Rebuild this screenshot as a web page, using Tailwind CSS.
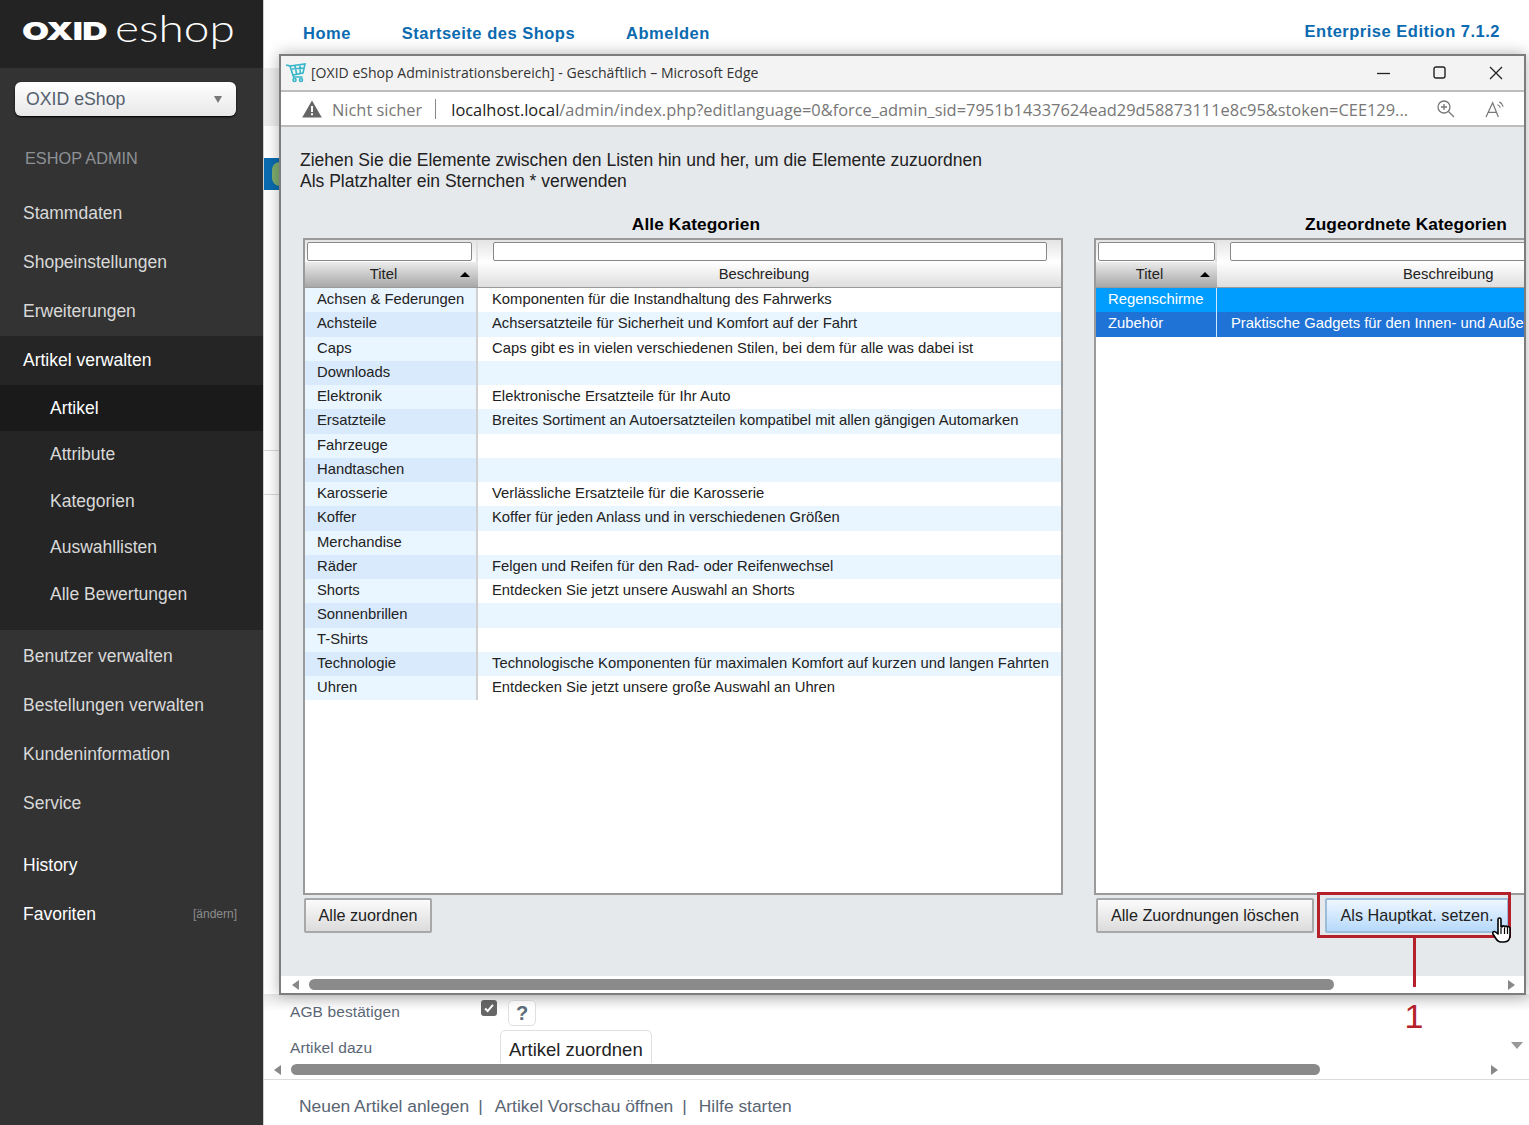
<!DOCTYPE html>
<html lang="de">
<head>
<meta charset="utf-8">
<title>OXID eShop</title>
<script src="https://cdn.jsdelivr.net/npm/@tailwindcss/browser@4"></script>
</head>
<body class="m-0 bg-white">
<div class="relative flex w-[1529px] h-[1125px] overflow-hidden bg-white font-['Liberation_Sans',Arial,sans-serif]">

  <!-- Sidebar -->
  <aside class="w-[263px] h-full shrink-0 bg-[#333333] text-[#d9d9d9] text-[17.5px] flex flex-col">
    <div class="h-[68px] bg-[#232323] flex items-center pl-[22px] text-white whitespace-nowrap">
      <span class="inline-block origin-left font-['Inter',sans-serif] font-black text-[25px] leading-none scale-x-[1.4] w-[84px] tracking-[-0.5px] -mt-[6px]">OXID</span>
      <span class="inline-block origin-left font-['Lato',sans-serif] font-light text-[38px] leading-none ml-[9px] -mt-[14px] scale-x-[1.21]">eshop</span>
    </div>
    <div class="pt-[14px] pl-[15px]">
      <div class="w-[221px] h-[34px] rounded-[6px] bg-linear-to-b from-white to-[#e8e8e8] shadow-[0_1px_2px_#000] flex items-center justify-between pl-[11px] pr-[14px] text-[#55606e] text-[17.7px]">
        <span>OXID eShop</span>
        <span class="w-0 h-0 border-x-[4.5px] border-x-transparent border-t-[7px] border-t-[#777]"></span>
      </div>
    </div>
    <div class="pl-[25px] pt-[32px] h-[73px] text-[#8d9195] text-[16.3px] leading-[20px]">ESHOP ADMIN</div>
    <div class="h-[49px] pl-[23px] flex items-center">Stammdaten</div>
    <div class="h-[49px] pl-[23px] flex items-center">Shopeinstellungen</div>
    <div class="h-[49px] pl-[23px] flex items-center">Erweiterungen</div>
    <div class="h-[294px] bg-[#252525] flex flex-col">
      <div class="h-[49px] pl-[23px] flex items-center text-white">Artikel verwalten</div>
      <div class="h-[46px] pl-[50px] flex items-center bg-[#1a1a1a] text-white">Artikel</div>
      <div class="h-[46.5px] pl-[50px] flex items-center">Attribute</div>
      <div class="h-[46.5px] pl-[50px] flex items-center">Kategorien</div>
      <div class="h-[46.5px] pl-[50px] flex items-center">Auswahllisten</div>
      <div class="h-[46.5px] pl-[50px] flex items-center">Alle Bewertungen</div>
    </div>
    <div class="h-[2px]"></div>
    <div class="h-[49px] pl-[23px] flex items-center">Benutzer verwalten</div>
    <div class="h-[49px] pl-[23px] flex items-center">Bestellungen verwalten</div>
    <div class="h-[49px] pl-[23px] flex items-center">Kundeninformation</div>
    <div class="h-[49px] pl-[23px] flex items-center">Service</div>
    <div class="h-[13px]"></div>
    <div class="h-[49px] pl-[23px] flex items-center text-white">History</div>
    <div class="h-[49px] pl-[23px] pr-[26px] flex items-center justify-between text-white">
      <span>Favoriten</span><span class="text-[12px] text-[#8d8d8d] -mt-[1px]">[ändern]</span>
    </div>
  </aside>

  <!-- Main page behind the popup -->
  <main class="relative flex-1 flex flex-col border-l border-[#cfcfcf]">
    <header class="h-[68px] flex items-start justify-between pt-[22px] pl-[39px] pr-[29px] font-bold text-[#0b6ab0] text-[16.5px] tracking-[0.5px] leading-[22px]">
      <nav class="flex gap-[51px]"><span>Home</span><span>Startseite des Shops</span><span>Abmelden</span></nav>
      <span class="-mt-[2px]">Enterprise Edition 7.1.2</span>
    </header>
    <div class="h-[58px] bg-[#eeeeee] w-[17px]"></div>
    <div class="h-[32px]"></div>
    <div class="h-[32px] w-[17px] bg-[#0a6cb0] flex items-center overflow-hidden"><span class="w-[16px] h-[24px] rounded-full bg-[#7fae70] ml-[8px] shrink-0"></span></div>
    <div class="h-[260px]"></div>
    <div class="h-[44px] w-[17px] border-t border-[#d8d8d8]"></div>
    <div class="flex-1 w-[17px] border-t border-[#d8d8d8]"></div>
    <div class="h-[46px] flex items-center pl-[35px] pt-[7px] text-[#596573] text-[17.4px] gap-[9px] border-t border-[#dcdcdc]">
      <span>Neuen Artikel anlegen</span><span>|</span><span class="ml-[3px]">Artikel Vorschau öffnen</span><span>|</span><span class="ml-[3px]">Hilfe starten</span>
    </div>
  </main>

  <!-- Page content showing beneath the popup -->
  <div class="absolute left-[264px] top-[994px] w-[1265px] h-[85px] bg-linear-to-b from-[#e6e6e6] to-white to-[20%] text-[#5b6675]">
    <div class="flex items-start h-[69px] pl-[26px] pt-[6px]">
      <div class="w-[191px] text-[15.5px] tracking-[0.1px]">
        <div class="leading-[24px]">AGB bestätigen</div>
        <div class="leading-[24px] mt-[12px]">Artikel dazu</div>
      </div>
      <div class="w-[27px] h-full relative">
        <span class="absolute left-0 top-0 w-[16px] h-[16px] rounded-[3px] bg-[#666] flex items-center justify-center">
          <svg viewBox="0 0 16 16" class="w-[14px] h-[14px]"><path d="M3.5 8.5l3 3 6-7" fill="none" stroke="#fff" stroke-width="2.4"/></svg>
        </span>
      </div>
      <div class="relative h-full">
        <span class="absolute left-0 top-0 w-[28px] h-[26px] rounded-[5px] border border-[#dfdfdf] bg-white flex items-center justify-center font-bold text-[#5f6d7a] text-[20px]">?</span>
        <span class="absolute -left-[8px] top-[30px] w-[152px] h-[40px] rounded-t-[5px] border border-[#dfdfdf] bg-white pl-[8px] pt-[7px] text-[#222] text-[18.5px] leading-[24px] whitespace-nowrap">Artikel zuordnen</span>
      </div>
    </div>
    <div class="relative h-[16px] bg-white">
      <span class="absolute left-[10px] top-[2px] w-0 h-0 border-y-[5px] border-y-transparent border-r-[7px] border-r-[#888]"></span>
      <span class="absolute left-[27px] top-[1px] w-[1029px] h-[11px] rounded-full bg-[#8a8a8a]"></span>
      <span class="absolute left-[1227px] top-[2px] w-0 h-0 border-y-[5px] border-y-transparent border-l-[7px] border-l-[#888]"></span>
    </div>
  </div>
  <span class="absolute left-[1511px] top-[1042px] w-0 h-0 border-x-[6px] border-x-transparent border-t-[7px] border-t-[#999]"></span>

  <!-- Popup window -->
  <section class="absolute left-[279px] top-[54px] w-[1247px] h-[941px] flex flex-col border-2 border-[#7d7d7d] bg-[#e6e9ec] shadow-[0_0_14px_rgba(0,0,0,0.3)] overflow-hidden">
    <div class="h-[36px] shrink-0 bg-[#f3f3f3] border-b-2 border-[#bdbdbd] flex items-center text-[#333] text-[14.05px] font-['Open_Sans',sans-serif] pl-[4px]">
      <svg viewBox="0 0 22 22" class="w-[22px] h-[22px] shrink-0" fill="none" stroke="#36b6c8" stroke-width="1.6"><path d="M1 3l4 1 3.5 11h9"/><path d="M5 4l15-2-2 9-10 2M7 7l12-1M10 3.5l1.500 8M15 3l.3 8"/><circle cx="9.500" cy="18" r="1.500"/><circle cx="16" cy="18" r="1.500"/></svg>
      <span class="ml-[4px] whitespace-nowrap">[OXID eShop Administrationsbereich] - Geschäftlich – Microsoft Edge</span>
      <div class="ml-auto flex items-center">
        <svg viewBox="0 0 14 14" class="w-[14px] h-[14px] mr-[42px]"><path d="M0 7.500h13" stroke="#222" stroke-width="1.300"/></svg>
        <svg viewBox="0 0 14 14" class="w-[14px] h-[14px] mr-[42px]"><rect x="1" y="1" width="11" height="11" rx="2" fill="none" stroke="#222" stroke-width="1.400"/></svg>
        <svg viewBox="0 0 14 14" class="w-[14px] h-[14px] mr-[21px]"><path d="M1 1l12 12M13 1L1 13" stroke="#222" stroke-width="1.300"/></svg>
      </div>
    </div>
    <div class="h-[35px] shrink-0 bg-white border-b-2 border-[#bdbdbd] flex items-center pl-[21px] pt-[3px] text-[16.4px] font-['Open_Sans',sans-serif] text-[#777] whitespace-nowrap">
      <svg viewBox="0 0 20 18" class="w-[20px] h-[18px] shrink-0 -mt-[2px]"><path d="M10 0.500L19.800 17.500H0.200Z" fill="#666"/><path d="M9 6h2v6H9zM9 13.300h2v2H9z" fill="#fff"/></svg>
      <span class="ml-[10px]">Nicht sicher</span>
      <span class="ml-[13px] w-px h-[20px] bg-[#888] -mt-[2px]"></span>
      <span class="ml-[15px]"><span class="text-[#222]">localhost.local</span>/admin/index.php?editlanguage=0&amp;force_admin_sid=7951b14337624ead29d58873111e8c95&amp;stoken=CEE129...</span>
      <div class="ml-auto flex items-center pr-[18px] -mt-[2px]">
        <svg viewBox="0 0 20 20" class="w-[20px] h-[20px] mr-[29px]" fill="none" stroke="#777" stroke-width="1.300"><circle cx="8" cy="8" r="6"/><path d="M12.500 12.500l5.500 5.500M5 8h6M8 5v6"/></svg>
        <svg viewBox="0 0 22 20" class="w-[21px] h-[19px]" fill="none" stroke="#777" stroke-width="1.300"><path d="M1 18L8 3l6 15M3.500 13h8"/><path d="M13 5a4 4 0 0 1 3 3M15 2a7 7 0 0 1 4 5"/></svg>
      </div>
    </div>

    <div class="flex-1 min-h-0 pt-[23px] pl-[19px] flex flex-col text-black">
      <p class="m-0 text-[17.5px] leading-[21px] text-[#222]">Ziehen Sie die Elemente zwischen den Listen hin und her, um die Elemente zuzuordnen<br>Als Platzhalter ein Sternchen * verwenden</p>

      <div class="flex mt-[19px] pl-[3px] gap-[31px]">
        <!-- Left list -->
        <div class="w-[760px] shrink-0">
          <h2 class="m-0 h-[27px] pl-[26px] text-center text-[17.3px] font-bold leading-[26px] tracking-[0.1px]">Alle Kategorien</h2>
          <div class="h-[657px] border-2 border-[#9a9a9a] bg-white text-[14.8px] text-[#222] overflow-hidden">
            <div class="grid grid-cols-[173px_1fr] h-[22px] bg-linear-to-b from-[#e4e4e4] to-white">
              <div class="pl-[2px] pt-[2px] border-r-2 border-[#e0e0e0]"><div class="w-[165px] h-[19px] rounded-[2px] border border-[#888] bg-white"></div></div>
              <div class="pl-[15px] pt-[2px]"><div class="w-[554px] h-[19px] rounded-[2px] border border-[#888] bg-white"></div></div>
            </div>
            <div class="grid grid-cols-[173px_1fr] h-[25px] leading-[25px] border-b-2 border-[#9a9a9a] box-content -mb-[1px]">
              <div class="relative text-center pr-[16px] bg-linear-to-b from-[#ececec] to-[#a8a8a8]">Titel<span class="absolute right-[8px] top-[10px] w-0 h-0 border-x-[5px] border-x-transparent border-b-[5px] border-b-black"></span></div>
              <div class="text-center pr-[11px] bg-linear-to-b from-white to-[#dedede]">Beschreibung</div>
            </div>
            <div class="grid grid-cols-[173px_1fr] auto-rows-[24.25px] leading-[23.5px] whitespace-nowrap">
              <div class="pl-[12px] bg-[#e9f5ff] border-r-2 border-[#d0d0d0]">Achsen &amp; Federungen</div><div class="pl-[14px] bg-white">Komponenten für die Instandhaltung des Fahrwerks</div>
              <div class="pl-[12px] bg-[#d9eafc] border-r-2 border-[#d0d0d0]">Achsteile</div><div class="pl-[14px] bg-[#e9f5ff]">Achsersatzteile für Sicherheit und Komfort auf der Fahrt</div>
              <div class="pl-[12px] bg-[#e9f5ff] border-r-2 border-[#d0d0d0]">Caps</div><div class="pl-[14px] bg-white">Caps gibt es in vielen verschiedenen Stilen, bei dem für alle was dabei ist</div>
              <div class="pl-[12px] bg-[#d9eafc] border-r-2 border-[#d0d0d0]">Downloads</div><div class="pl-[14px] bg-[#e9f5ff]"></div>
              <div class="pl-[12px] bg-[#e9f5ff] border-r-2 border-[#d0d0d0]">Elektronik</div><div class="pl-[14px] bg-white">Elektronische Ersatzteile für Ihr Auto</div>
              <div class="pl-[12px] bg-[#d9eafc] border-r-2 border-[#d0d0d0]">Ersatzteile</div><div class="pl-[14px] bg-[#e9f5ff]">Breites Sortiment an Autoersatzteilen kompatibel mit allen gängigen Automarken</div>
              <div class="pl-[12px] bg-[#e9f5ff] border-r-2 border-[#d0d0d0]">Fahrzeuge</div><div class="pl-[14px] bg-white"></div>
              <div class="pl-[12px] bg-[#d9eafc] border-r-2 border-[#d0d0d0]">Handtaschen</div><div class="pl-[14px] bg-[#e9f5ff]"></div>
              <div class="pl-[12px] bg-[#e9f5ff] border-r-2 border-[#d0d0d0]">Karosserie</div><div class="pl-[14px] bg-white">Verlässliche Ersatzteile für die Karosserie</div>
              <div class="pl-[12px] bg-[#d9eafc] border-r-2 border-[#d0d0d0]">Koffer</div><div class="pl-[14px] bg-[#e9f5ff]">Koffer für jeden Anlass und in verschiedenen Größen</div>
              <div class="pl-[12px] bg-[#e9f5ff] border-r-2 border-[#d0d0d0]">Merchandise</div><div class="pl-[14px] bg-white"></div>
              <div class="pl-[12px] bg-[#d9eafc] border-r-2 border-[#d0d0d0]">Räder</div><div class="pl-[14px] bg-[#e9f5ff]">Felgen und Reifen für den Rad- oder Reifenwechsel</div>
              <div class="pl-[12px] bg-[#e9f5ff] border-r-2 border-[#d0d0d0]">Shorts</div><div class="pl-[14px] bg-white">Entdecken Sie jetzt unsere Auswahl an Shorts</div>
              <div class="pl-[12px] bg-[#d9eafc] border-r-2 border-[#d0d0d0]">Sonnenbrillen</div><div class="pl-[14px] bg-[#e9f5ff]"></div>
              <div class="pl-[12px] bg-[#e9f5ff] border-r-2 border-[#d0d0d0]">T-Shirts</div><div class="pl-[14px] bg-white"></div>
              <div class="pl-[12px] bg-[#d9eafc] border-r-2 border-[#d0d0d0]">Technologie</div><div class="pl-[14px] bg-[#e9f5ff]">Technologische Komponenten für maximalen Komfort auf kurzen und langen Fahrten</div>
              <div class="pl-[12px] bg-[#e9f5ff] border-r-2 border-[#d0d0d0]">Uhren</div><div class="pl-[14px] bg-white">Entdecken Sie jetzt unsere große Auswahl an Uhren</div>
            </div>
          </div>
          <div class="pt-[3px] pl-[1px]">
            <button class="w-[128px] h-[35px] rounded-[2px] border-2 border-[#a8a8a8] bg-linear-to-b from-[#fbfbfb] to-[#dcdcdc] text-[16.2px] text-[#222]">Alle zuordnen</button>
          </div>
        </div>

        <!-- Right list -->
        <div class="flex-1 min-w-0">
          <h2 class="m-0 h-[27px] pl-[211px] text-[17.3px] font-bold leading-[26px] tracking-[0.1px] whitespace-nowrap">Zugeordnete Kategorien</h2>
          <div class="h-[657px] border-y-2 border-l-2 border-[#9a9a9a] bg-white text-[14.8px] text-[#222] overflow-hidden">
            <div class="grid grid-cols-[121px_1fr] h-[22px] bg-linear-to-b from-[#e4e4e4] to-white">
              <div class="pl-[2px] pt-[2px] border-r-2 border-[#e0e0e0]"><div class="w-[117px] h-[19px] rounded-[2px] border border-[#888] bg-white"></div></div>
              <div class="pl-[13px] pt-[2px]"><div class="w-[400px] h-[19px] rounded-[2px] border border-[#888] bg-white"></div></div>
            </div>
            <div class="grid grid-cols-[121px_1fr] h-[25px] leading-[25px] border-b-2 border-[#9a9a9a] box-content -mb-[1px]">
              <div class="relative text-center pr-[14px] bg-linear-to-b from-[#ececec] to-[#a8a8a8]">Titel<span class="absolute right-[7px] top-[10px] w-0 h-0 border-x-[5px] border-x-transparent border-b-[5px] border-b-black"></span></div>
              <div class="pl-[186px] bg-linear-to-b from-white to-[#dedede]">Beschreibung</div>
            </div>
            <div class="grid grid-cols-[121px_1fr] auto-rows-[24.25px] leading-[23.5px] whitespace-nowrap text-white">
              <div class="pl-[12px] bg-[#009dff] border-r border-[#cfe6fb]">Regenschirme</div><div class="pl-[14px] bg-[#009dff]"></div>
              <div class="pl-[12px] bg-[#1f73d6] border-r border-[#cfe6fb]">Zubehör</div><div class="pl-[14px] bg-[#1f73d6] overflow-hidden">Praktische Gadgets für den Innen- und Außenbereich</div>
            </div>
          </div>
          <div class="pt-[3px] pl-[2px] flex items-start">
            <button class="w-[218px] h-[35px] shrink-0 rounded-[2px] border-2 border-[#a8a8a8] bg-linear-to-b from-[#fbfbfb] to-[#dcdcdc] text-[16.2px] text-[#222]">Alle Zuordnungen löschen</button>
            <button class="ml-[11px] w-[184px] h-[35px] shrink-0 rounded-[2px] border-2 border-[#9cbcd8] bg-linear-to-b from-[#eef7ff] to-[#b6d9fb] text-[16.2px] text-[#222]">Als Hauptkat. setzen.</button>
          </div>
        </div>
      </div>
    </div>

    <!-- Popup scrollbar -->
    <div class="relative h-[17px] shrink-0 bg-white">
      <span class="absolute left-[11px] top-[4px] w-0 h-0 border-y-[5px] border-y-transparent border-r-[7px] border-r-[#888]"></span>
      <span class="absolute left-[28px] top-[3px] w-[1025px] h-[11px] rounded-full bg-[#8a8a8a]"></span>
      <span class="absolute right-[9px] top-[4px] w-0 h-0 border-y-[5px] border-y-transparent border-l-[7px] border-l-[#888]"></span>
    </div>
  </section>

  <!-- Red annotation -->
  <div class="absolute left-[1317px] top-[892px] w-[194px] h-[46px] border-[3px] border-[#b5212a]"></div>
  <div class="absolute left-[1413px] top-[938px] w-[3px] h-[49px] bg-[#b5212a]"></div>
  <div class="absolute left-[1404px] top-[996px] w-[20px] text-center text-[#b5212a] text-[34px] leading-[40px]">1</div>

  <!-- Hand cursor -->
  <svg viewBox="0 0 20 28" class="absolute left-[1492px] top-[917px] w-[20px] h-[28px]">
    <path d="M6 2.500c0-2 3-2 3 0v7.500l1 0c0-1.500 2.500-1.500 2.700 0 .3-1.300 2.500-1.300 2.700.3 .4-1 2.400-.8 2.600.7v7c0 4-2 7-6 7h-3c-3 0-4-1.500-5.500-4L1 17c-1-1.800 1-3.200 2.500-2L6 17z" fill="#fff" stroke="#000" stroke-width="1.600" stroke-linejoin="round"/>
    <path d="M9 11v6M12.500 11v6M15.500 11v6" stroke="#000" stroke-width="1.200"/>
  </svg>
</div>
</body>
</html>
